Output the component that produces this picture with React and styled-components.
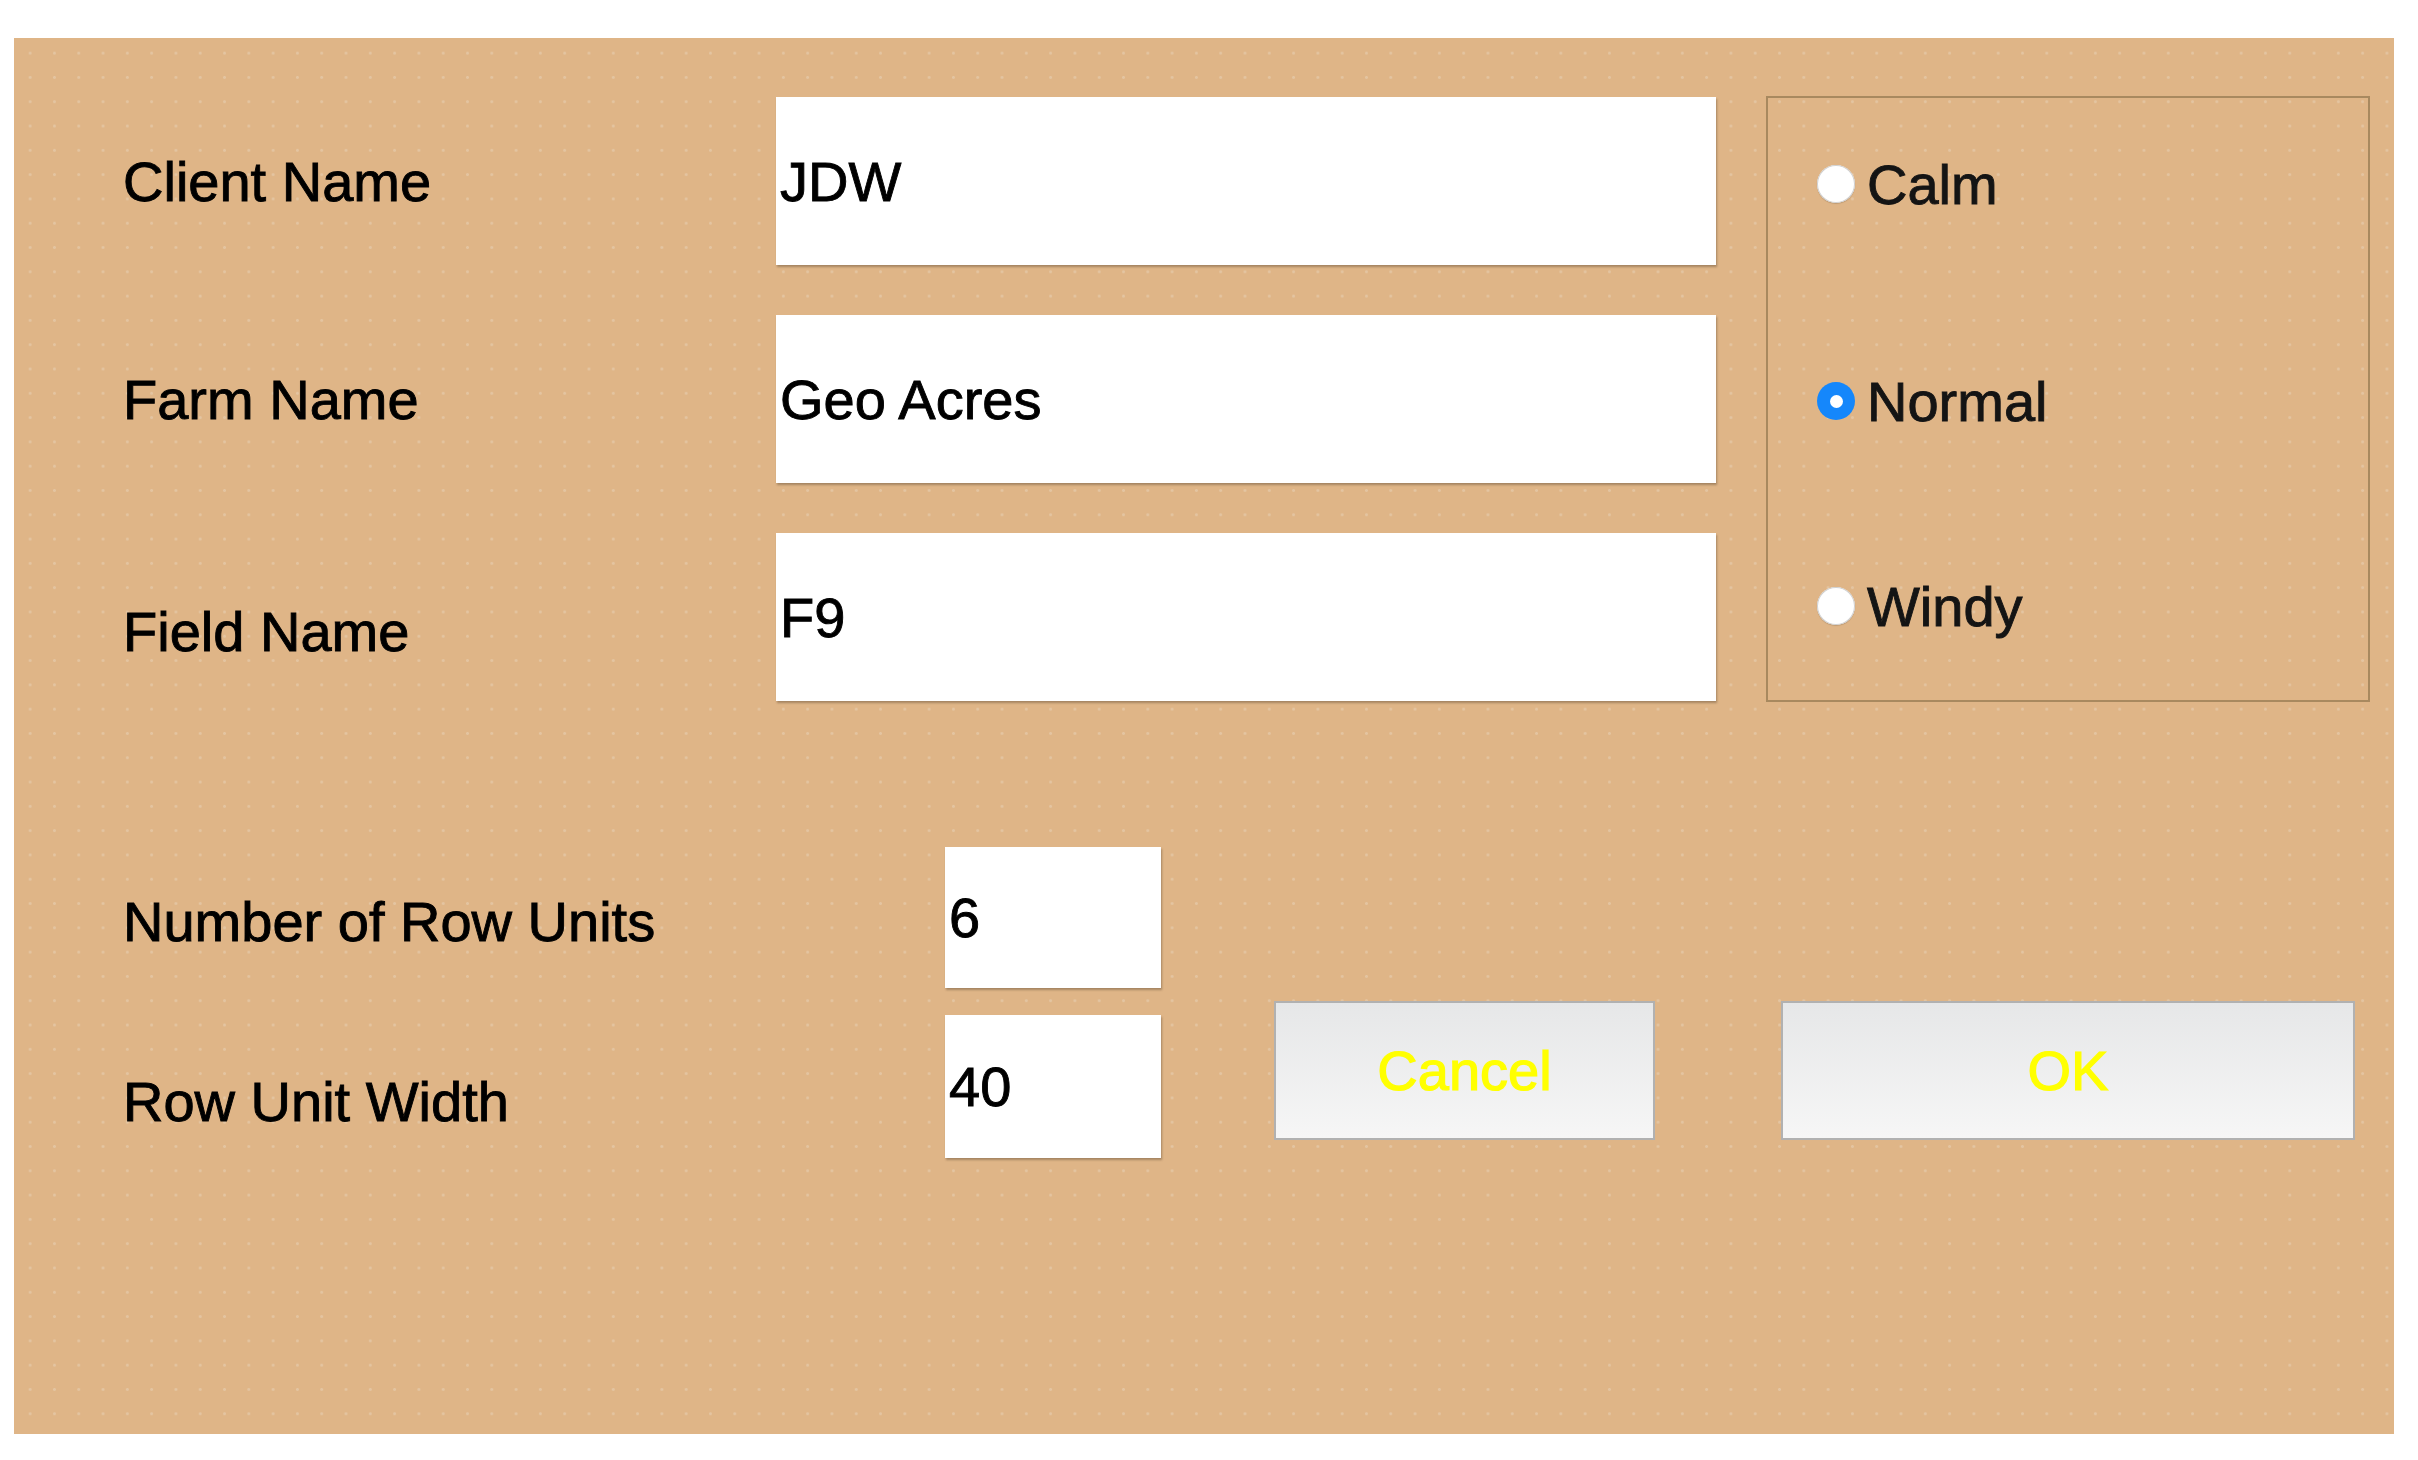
import React, { useState } from 'react'
import styled, { createGlobalStyle } from 'styled-components'

const GlobalStyle = createGlobalStyle`
html, body {
  margin: 0;
  padding: 0;
  background: #ffffff;
}
body {
  font-family: 'Liberation Sans', Arial, sans-serif;
}
`

const Page = styled.div`
padding: 38px 0 0 14px;
`

const Panel = styled.div`
width: 2380px;
height: 1396px;
box-sizing: border-box;
padding: 58px 0 0 109px;
background-color: #dfb587;
background-image: radial-gradient(circle, rgba(232, 212, 188, 0.5) 1.1px, transparent 1.7px);
background-size: 24.3px 24.3px;
background-position: 4px 3px;
display: flex;
flex-direction: column;
gap: 145px;
`

const TopSection = styled.div`
display: flex;
align-items: flex-start;
gap: 50px;
`

const FieldGrid = styled.div`
display: grid;
grid-template-columns: 653px 940px;
grid-auto-rows: 168px;
row-gap: 50px;
margin-top: 1px;
`

const Label = styled.div`
font-size: 56px;
color: #000;
-webkit-text-stroke: 0.9px #000;
display: flex;
align-items: center;
padding-top: ${p => p.$nudge || 0}px;
`

const TextBox = styled.input`
box-sizing: border-box;
width: ${p => p.$w}px;
height: ${p => p.$h}px;
border: none;
outline: none;
background: #fff;
padding: 0 0 0 4px;
margin: 0;
font-family: 'Liberation Sans', Arial, sans-serif;
font-size: 56px;
color: #000;
-webkit-text-stroke: 0.9px #000;
box-shadow: 1px 2px 2px rgba(60, 45, 30, 0.35);
`

const WindGroup = styled.div`
box-sizing: border-box;
width: 604px;
height: 606px;
border: 2px solid #a8895f;
padding: 56px 0 0 49px;
display: flex;
flex-direction: column;
`

const RadioRow = styled.label`
display: flex;
align-items: center;
gap: 12px;
height: 60px;
margin-top: ${p => p.$space}px;
font-size: 56px;
color: #141414;
-webkit-text-stroke: 0.9px #141414;
cursor: pointer;
`

const RadioDot = styled.span`
box-sizing: border-box;
width: 38px;
height: 38px;
border-radius: 50%;
flex-shrink: 0;
display: flex;
align-items: center;
justify-content: center;
background: ${p => (p.$on ? '#1587fb' : '#ffffff')};
box-shadow: ${p => (p.$on ? 'none' : 'inset 0 0 0 1px #cfcfcf, 0 1px 1px rgba(0,0,0,0.15)')};
&::after {
  content: '';
  width: 13px;
  height: 13px;
  border-radius: 50%;
  background: #fff;
  display: ${p => (p.$on ? 'block' : 'none')};
}
`

const BottomSection = styled.div`
display: flex;
align-items: flex-start;
`

const UnitGrid = styled.div`
display: grid;
grid-template-columns: 822px 216px;
grid-template-rows: 141px 143px;
row-gap: 27px;
`

const ButtonRow = styled.div`
display: flex;
gap: 126px;
margin-left: 113px;
margin-top: 154px;
`

const Button = styled.button`
box-sizing: border-box;
width: ${p => p.$w}px;
height: 139px;
border: 2px solid #b1b1b1;
background: linear-gradient(to bottom, #e6e7e8, #f6f6f6);
color: #ffff00;
-webkit-text-stroke: 1.2px #ffff00;
font-family: 'Liberation Sans', Arial, sans-serif;
font-size: 56px;
padding: 0;
cursor: pointer;
`

const fields = [
  { label: 'Client Name', value: 'JDW', nudge: 0 },
  { label: 'Farm Name', value: 'Geo Acres', nudge: 0 },
  { label: 'Field Name', value: 'F9', nudge: 28 },
]

const winds = [
  { name: 'Calm', space: 0 },
  { name: 'Normal', space: 157 },
  { name: 'Windy', space: 145 },
]

export default function App() {
  const [wind, setWind] = useState('Normal')

  return (
    <>
      <GlobalStyle />
      <Page>
        <Panel>
          <TopSection>
            <FieldGrid>
              {fields.map(f => (
                <React.Fragment key={f.label}>
                  <Label $nudge={f.nudge}>{f.label}</Label>
                  <TextBox $w={940} $h={168} defaultValue={f.value} />
                </React.Fragment>
              ))}
            </FieldGrid>
            <WindGroup>
              {winds.map(w => (
                <RadioRow key={w.name} $space={w.space} onClick={() => setWind(w.name)}>
                  <RadioDot $on={wind === w.name} />
                  {w.name}
                </RadioRow>
              ))}
            </WindGroup>
          </TopSection>
          <BottomSection>
            <UnitGrid>
              <Label $nudge={8}>Number of Row Units</Label>
              <TextBox $w={216} $h={141} defaultValue="6" />
              <Label $nudge={30}>Row Unit Width</Label>
              <TextBox $w={216} $h={143} defaultValue="40" />
            </UnitGrid>
            <ButtonRow>
              <Button $w={381}>Cancel</Button>
              <Button $w={574}>OK</Button>
            </ButtonRow>
          </BottomSection>
        </Panel>
      </Page>
    </>
  )
}
